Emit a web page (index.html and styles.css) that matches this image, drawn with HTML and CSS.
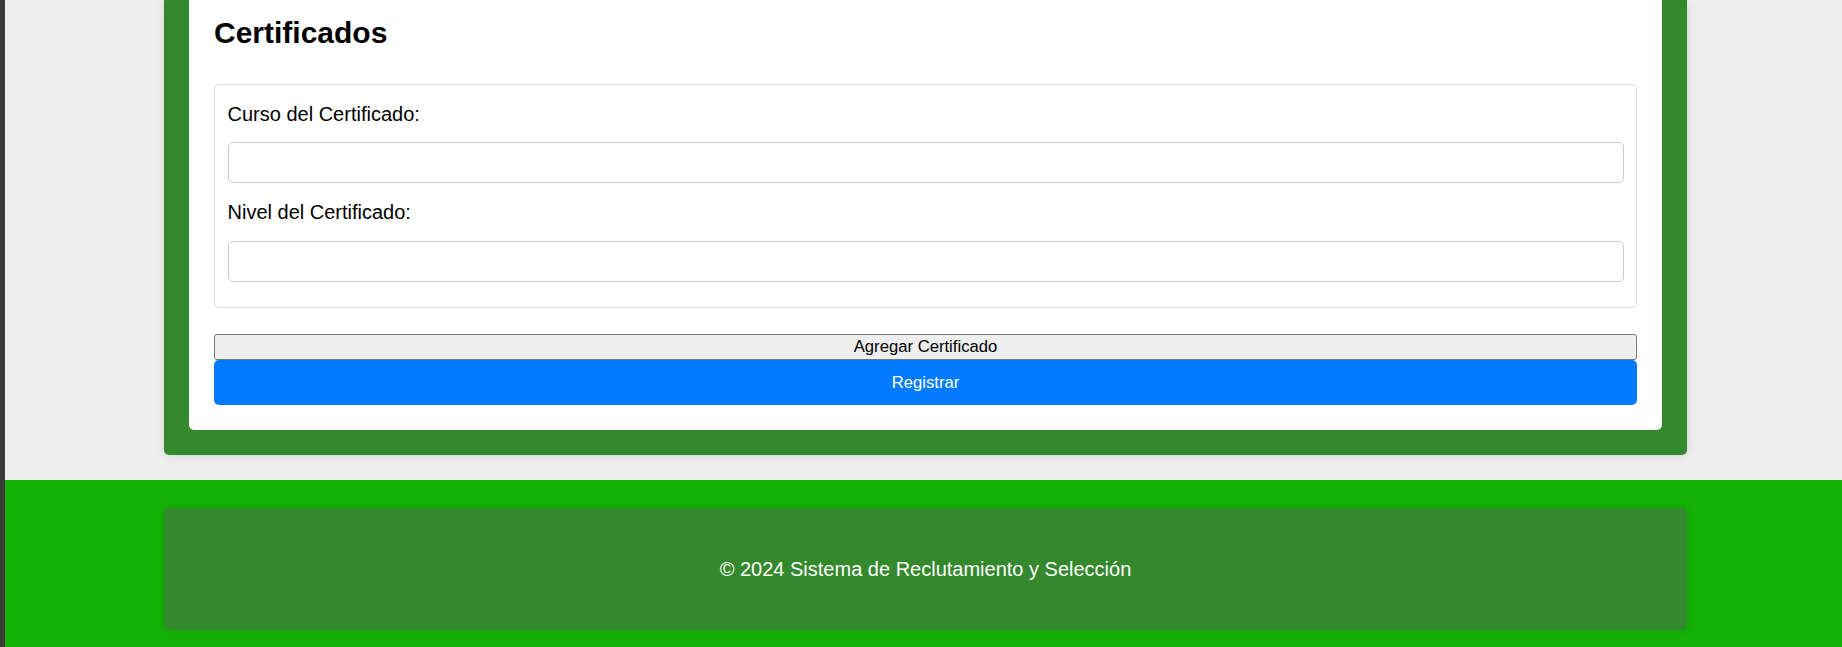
FILE: index.html
```html
<!DOCTYPE html>
<html lang="es">
<head>
<meta charset="utf-8">
<title>Certificados</title>
<link rel="stylesheet" href="styles.css">
</head>
<body>
<div class="strip"></div>
<div class="page">
  <main class="outer">
    <section class="card">
      <h2 class="title">Certificados</h2>
      <div class="cert-box">
        <label class="field-label" for="curso">Curso del Certificado:</label>
        <input class="field-input" id="curso" type="text">
        <label class="field-label" for="nivel">Nivel del Certificado:</label>
        <input class="field-input" id="nivel" type="text">
      </div>
      <button class="btn-add" type="button">Agregar Certificado</button>
      <button class="btn-submit" type="submit">Registrar</button>
    </section>
  </main>
  <footer class="footer">
    <div class="footer-box">
      <p class="footer-text">© 2024 Sistema de Reclutamiento y Selección</p>
    </div>
  </footer>
</div>
</body>
</html>
```

FILE: styles.css
```css
* { box-sizing: border-box; }

html, body {
  margin: 0;
  padding: 0;
  height: 647px;
  overflow: hidden;
}

body {
  display: flex;
  flex-direction: row;
  background: #efefef;
  font-family: "Liberation Sans", Arial, sans-serif;
  color: #000;
}

.strip {
  width: 5px;
  flex: 0 0 5px;
  background: #3a3a3a;
}

.page {
  flex: 1;
  display: flex;
  flex-direction: column;
}

.outer {
  width: 1523px;
  margin: 0 0 25px 159px;
  padding: 0 25px 25px;
  background: #33892b;
  border-radius: 0 0 5px 5px;
  box-shadow: 0 0 12px rgba(0, 0, 0, 0.12);
}

.card {
  background: #fff;
  border-radius: 0 0 5px 5px;
  padding: 16px 25px 25px;
  display: flex;
  flex-direction: column;
}

.title {
  margin: 0 0 34px;
  font-size: 30px;
  line-height: 34px;
  font-weight: bold;
}

.cert-box {
  border: 1px solid #ddd;
  border-radius: 5px;
  padding: 12.5px;
  margin-bottom: 26px;
  display: flex;
  flex-direction: column;
}

.field-label {
  display: block;
  font-size: 20px;
  line-height: 23px;
  margin-top: 5px;
}

.field-input {
  display: block;
  width: 100%;
  height: 41px;
  margin: 16.5px 0 13px;
  border: 1px solid #ccc;
  border-radius: 5px;
  background: #fff;
  font-size: 20px;
  padding: 0 10px;
}

.btn-add {
  display: block;
  width: 100%;
  height: 26px;
  margin: 0;
  padding: 0;
  background: #efefef;
  border: 1px solid #767676;
  border-radius: 3px;
  font-family: "Liberation Sans", Arial, sans-serif;
  font-size: 16.67px;
  line-height: 22px;
  color: #000;
}

.btn-submit {
  display: block;
  width: 100%;
  height: 45px;
  margin: 0;
  padding: 0;
  background: #007bff;
  border: none;
  border-radius: 5px;
  color: #fff;
  font-family: "Liberation Sans", Arial, sans-serif;
  font-size: 16.67px;
  line-height: 45px;
}

.footer {
  flex: 1;
  background: #15b005;
  padding: 28px 0 17px;
}

.footer-box {
  width: 1523px;
  margin-left: 159px;
  height: 122px;
  background: #33892b;
  border-radius: 5px;
  box-shadow: 0 0 6px rgba(0, 0, 0, 0.12);
  display: flex;
  align-items: center;
  justify-content: center;
}

.footer-text {
  margin: 0;
  color: #fff;
  font-size: 20px;
  line-height: 23px;
}
```
